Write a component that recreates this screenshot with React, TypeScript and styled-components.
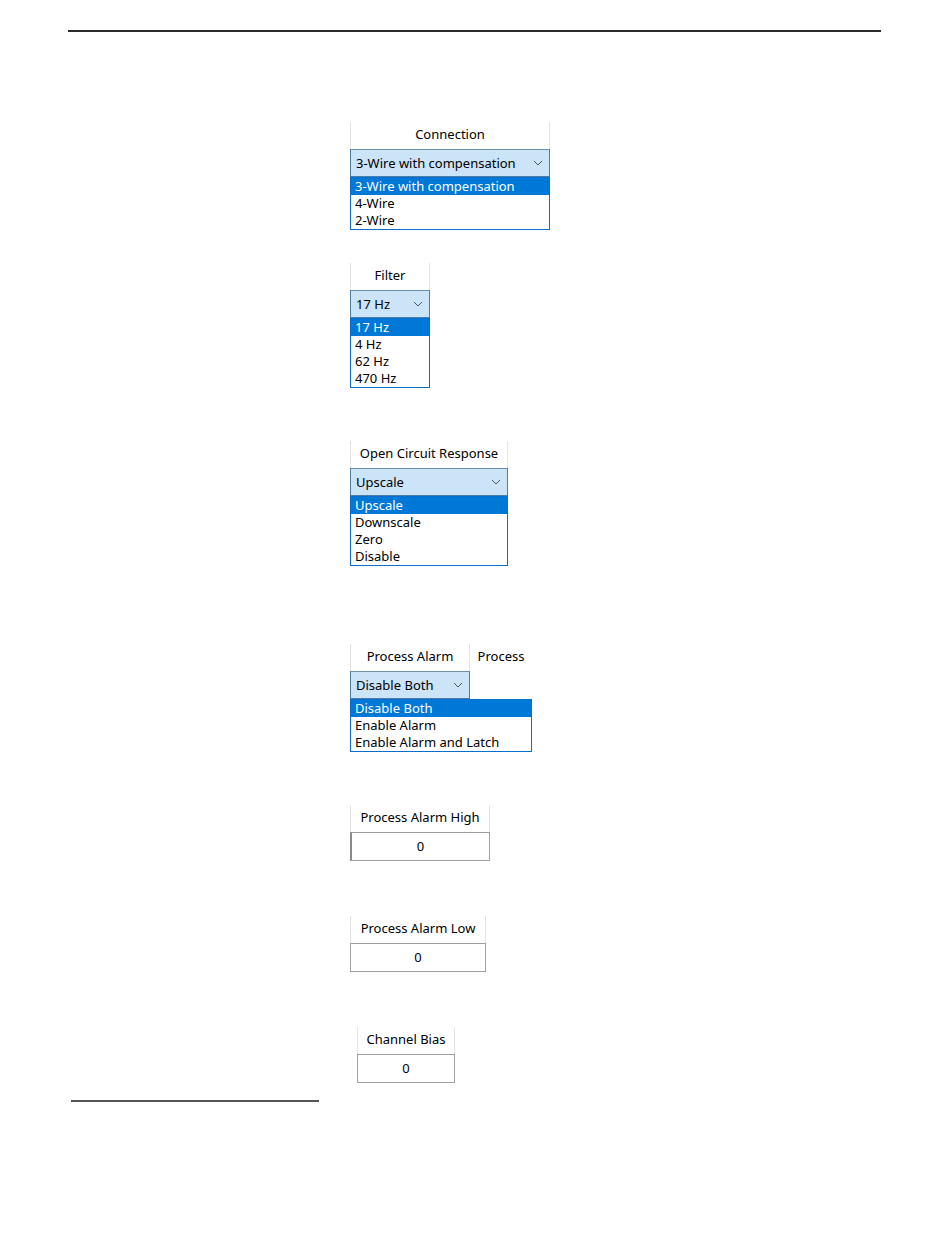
import styled, {createGlobalStyle} from "styled-components";

const GlobalStyle = createGlobalStyle`
    body {
        margin: 0;
        background: #ffffff;
        font-family: "Noto Sans", "Open Sans", sans-serif;
        color: #000000;
    }
`

type Dropdown = {
    title: string
    extraTitle?: string
    width: number
    listWidth?: number
    options: string[]
    gap: number
}

const dropdowns: Dropdown[] = [
    {title: 'Connection', width: 200, options: ['3-Wire with compensation', '4-Wire', '2-Wire'], gap: 90},
    {title: 'Filter', width: 80, options: ['17 Hz', '4 Hz', '62 Hz', '470 Hz'], gap: 33},
    {title: 'Open Circuit Response', width: 158, options: ['Upscale', 'Downscale', 'Zero', 'Disable'], gap: 53},
    {title: 'Process Alarm', extraTitle: 'Process', width: 120, listWidth: 182,
        options: ['Disable Both', 'Enable Alarm', 'Enable Alarm and Latch'], gap: 78},
]

const inputs = [
    {title: 'Process Alarm High', width: 140, gap: 53, offset: 0, thick: true},
    {title: 'Process Alarm Low', width: 136, gap: 55, offset: 0, thick: false},
    {title: 'Channel Bias', width: 98, gap: 55, offset: 7, thick: false},
]

const Chevron = () => (
    <svg width="10" height="6" viewBox="0 0 10 6">
        <path d="M1 1 L5 5 L9 1" fill="none" stroke="#555" strokeWidth="1"/>
    </svg>
)

export default function App() {
    return (
        <Page>
            <GlobalStyle/>
            <TopRule/>
            <Column>
                {dropdowns.map(d => (
                    <Block key={d.title} $gap={d.gap} $offset={0}>
                        <HeaderRow>
                            <HeaderCell $width={d.width}>{d.title}</HeaderCell>
                            {d.extraTitle && <ExtraCell $width={62}>{d.extraTitle}</ExtraCell>}
                        </HeaderRow>
                        <Combo $width={d.width}>
                            <span>{d.options[0]}</span>
                            <Chevron/>
                        </Combo>
                        <List $width={d.listWidth ?? d.width}>
                            {d.options.map((o, i) => (
                                <Item key={o} $selected={i === 0}>{o}</Item>
                            ))}
                        </List>
                    </Block>
                ))}
                {inputs.map(f => (
                    <Block key={f.title} $gap={f.gap} $offset={f.offset}>
                        <HeaderRow>
                            <HeaderCell $width={f.width}>{f.title}</HeaderCell>
                        </HeaderRow>
                        <ValueBox $width={f.width} $thick={f.thick}>0</ValueBox>
                    </Block>
                ))}
            </Column>
            <FootRule/>
        </Page>
    )
}

const Page = styled.div`
    width: 950px;
    height: 1260px;
    padding: 30px 0 0 68px;
    box-sizing: border-box;
`

const TopRule = styled.div`
    width: 813px;
    height: 2px;
    background: #2a2a2a;
`

const Column = styled.div`
    display: flex;
    flex-direction: column;
    align-items: flex-start;
    margin-left: 282px;
`

const Block = styled.div<{ $gap: number, $offset: number }>`
    display: flex;
    flex-direction: column;
    margin-top: ${p => p.$gap}px;
    margin-left: ${p => p.$offset}px;
`

const HeaderRow = styled.div`
    display: flex;
`

const HeaderCell = styled.div<{ $width: number }>`
    width: ${p => p.$width}px;
    height: 27px;
    box-sizing: border-box;
    border-left: 1px solid #e3e3e3;
    border-right: 1px solid #e3e3e3;
    font-size: 13px;
    line-height: 25px;
    text-align: center;
    white-space: nowrap;
    overflow: hidden;
`

const ExtraCell = styled(HeaderCell)`
    border-left: none;
    border-right: none;
`

const Combo = styled.div<{ $width: number }>`
    width: ${p => p.$width}px;
    height: 28px;
    box-sizing: border-box;
    border: 1px solid #4a7da8;
    border-top-color: #6d8fae;
    background: #cce4f7;
    display: flex;
    align-items: center;
    justify-content: space-between;
    padding: 0 6px 0 5px;
    font-size: 13px;
    white-space: nowrap;
`

const List = styled.div<{ $width: number }>`
    width: ${p => p.$width}px;
    box-sizing: border-box;
    border: 1px solid #0a6fcc;
    background: #ffffff;
    display: flex;
    flex-direction: column;
`

const Item = styled.div<{ $selected: boolean }>`
    height: 17px;
    line-height: 17px;
    padding-left: 4px;
    font-size: 13px;
    white-space: nowrap;
    background: ${p => p.$selected ? '#0078d7' : 'transparent'};
    color: ${p => p.$selected ? '#ffffff' : '#000000'};
`

const ValueBox = styled.div<{ $width: number, $thick: boolean }>`
    width: ${p => p.$width}px;
    height: 29px;
    box-sizing: border-box;
    border: 1px solid #a0a0a0;
    border-left: ${p => p.$thick ? '2px solid #8a8a8a' : '1px solid #a0a0a0'};
    font-size: 13px;
    line-height: 27px;
    text-align: center;
`

const FootRule = styled.div`
    width: 248px;
    height: 2px;
    margin: 17px 0 0 3px;
    background: #555555;
`
